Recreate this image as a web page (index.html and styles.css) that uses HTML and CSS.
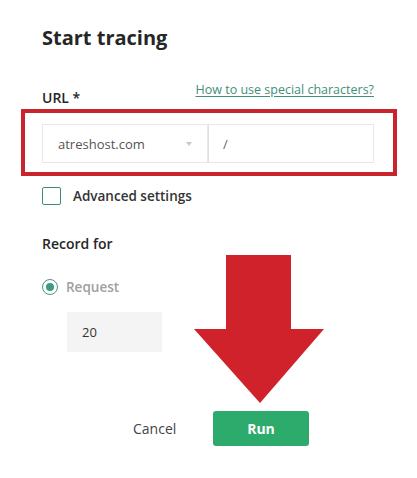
FILE: index.html
```html
<!DOCTYPE html>
<html lang="en">
<head>
<meta charset="utf-8">
<title>Start tracing</title>
<link rel="stylesheet" href="styles.css">
</head>
<body>
<div class="dialog">
  <h1 class="title">Start tracing</h1>
  <div class="url-head">
    <span class="label label-url">URL *</span>
    <a class="help-link" href="#">How to use special characters?</a>
  </div>
  <div class="url-row">
    <div class="select">
      <span class="select-text">atreshost.com</span>
      <span class="caret"></span>
    </div>
    <div class="path-input">/</div>
    <div class="highlight"></div>
  </div>
  <div class="check-row">
    <span class="checkbox"></span>
    <span class="check-label">Advanced settings</span>
  </div>
  <div class="label label-record">Record for</div>
  <div class="radio-row">
    <span class="radio"><span class="radio-dot"></span></span>
    <span class="radio-label">Request</span>
  </div>
  <div class="count-input">20</div>
  <div class="actions">
    <button class="btn-cancel">Cancel</button>
    <button class="btn-run">Run</button>
  </div>
  <svg class="arrow" width="130" height="149" viewBox="0 0 130 149">
    <polygon points="32,0 97,0 97,74 130,74 66,148 0,74 32,74" fill="#d0222b"/>
  </svg>
</div>
</body>
</html>
```

FILE: styles.css
```css
* { box-sizing: border-box; }
html, body {
  margin: 0;
  background: #ffffff;
}
body {
  font-family: "Open Sans", "Liberation Sans", sans-serif;
  color: #333333;
}
.dialog {
  position: relative;
  width: 417px;
  height: 478px;
  padding: 24px 43px 0 42px;
}
.title {
  margin: 0;
  font-size: 20px;
  line-height: 28px;
  font-weight: 700;
  color: #262626;
}
.url-head {
  margin-top: 29px;
  display: flex;
  justify-content: space-between;
  align-items: flex-start;
  width: 332px;
}
.label {
  font-size: 14px;
  line-height: 20px;
  font-weight: 600;
  color: #262626;
}
.label-url {
  margin-top: 7px;
}
.help-link {
  font-size: 12.5px;
  line-height: 18px;
  color: #3f8f7b;
  text-decoration: underline;
  text-underline-offset: 2px;
}
.url-row {
  position: relative;
  margin-top: 16px;
  display: flex;
  width: 332px;
  height: 39px;
}
.select {
  position: relative;
  width: 166px;
  height: 39px;
  border: 1px solid #e8e8e8;
  display: flex;
  align-items: center;
  padding-left: 15px;
  font-size: 13px;
  color: #555555;
}
.caret {
  position: absolute;
  left: 143px;
  top: 17px;
  width: 0;
  height: 0;
  border-left: 3px solid transparent;
  border-right: 3px solid transparent;
  border-top: 4px solid #c8c8c8;
}
.path-input {
  width: 166px;
  height: 39px;
  border: 1px solid #e8e8e8;
  border-left-color: #e0e0e0;
  display: flex;
  align-items: center;
  padding-left: 14px;
  font-size: 13px;
  color: #666666;
}
.highlight {
  position: absolute;
  left: -21px;
  top: -15px;
  width: 376px;
  height: 67px;
  border: 4px solid #c9242d;
  pointer-events: none;
}
.check-row {
  margin-top: 24px;
  display: flex;
  align-items: center;
  height: 18px;
}
.checkbox {
  width: 19px;
  height: 18px;
  border: 1px solid #3d8b7a;
  border-radius: 2px;
}
.check-label {
  margin-left: 12px;
  font-size: 13.5px;
  line-height: 18px;
  font-weight: 600;
  color: #333333;
}
.label-record {
  margin-top: 29px;
}
.radio-row {
  margin-top: 25px;
  display: flex;
  align-items: center;
  height: 16px;
}
.radio {
  width: 16px;
  height: 16px;
  border: 1px solid #4a9584;
  border-radius: 50%;
  display: flex;
  align-items: center;
  justify-content: center;
}
.radio-dot {
  width: 8px;
  height: 8px;
  border-radius: 50%;
  background: #3e9a83;
}
.radio-label {
  margin-left: 8px;
  font-size: 13.5px;
  line-height: 16px;
  font-weight: 600;
  color: #a0a0a0;
}
.count-input {
  margin-top: 17px;
  margin-left: 25px;
  width: 95px;
  height: 40px;
  background: #f4f4f4;
  display: flex;
  align-items: center;
  padding-left: 15px;
  font-size: 13px;
  color: #333333;
}
.actions {
  margin-top: 59px;
  display: flex;
  align-items: center;
  padding-left: 91px;
}
.btn-cancel {
  border: 0;
  background: transparent;
  padding: 0;
  font-family: inherit;
  font-size: 14px;
  color: #444444;
  width: 43px;
  text-align: left;
}
.btn-run {
  margin-left: 37px;
  width: 96px;
  height: 35px;
  border: 0;
  border-radius: 3px;
  background: #2dab6c;
  color: #ffffff;
  font-family: inherit;
  font-size: 14px;
  font-weight: 700;
}
.arrow {
  position: absolute;
  left: 194px;
  top: 255px;
}
```
